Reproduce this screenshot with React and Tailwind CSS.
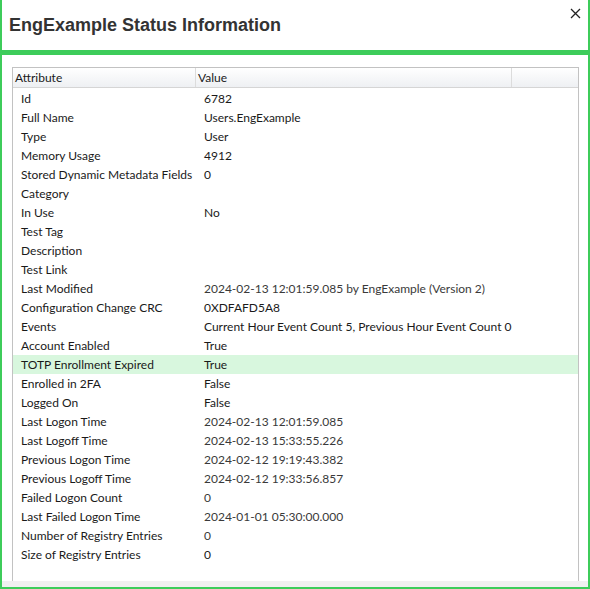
import React from "react";

const rows = [
  ["Id", "6782"],
  ["Full Name", "Users.EngExample"],
  ["Type", "User"],
  ["Memory Usage", "4912"],
  ["Stored Dynamic Metadata Fields", "0"],
  ["Category", ""],
  ["In Use", "No"],
  ["Test Tag", ""],
  ["Description", ""],
  ["Test Link", ""],
  ["Last Modified", "2024-02-13 12:01:59.085  by EngExample (Version 2)", true],
  ["Configuration Change CRC", "0XDFAFD5A8"],
  ["Events", "Current Hour Event Count 5, Previous Hour Event Count 0"],
  ["Account Enabled", "True"],
  ["TOTP Enrollment Expired", "True", false, true],
  ["Enrolled in 2FA", "False"],
  ["Logged On", "False"],
  ["Last Logon Time", "2024-02-13 12:01:59.085", true],
  ["Last Logoff Time", "2024-02-13 15:33:55.226", true],
  ["Previous Logon Time", "2024-02-12 19:19:43.382", true],
  ["Previous Logoff Time", "2024-02-12 19:33:56.857", true],
  ["Failed Logon Count", "0", true],
  ["Last Failed Logon Time", "2024-01-01 05:30:00.000", true],
  ["Number of Registry Entries", "0", true],
  ["Size of Registry Entries", "0"],
];

export default function App() {
  return (
    <div className="w-[590px] h-[589px] bg-white border-l-2 border-r-2 border-b-2 border-[#3dcc5a] flex flex-col overflow-hidden">
      <div className="h-[50px] relative flex items-center pl-[7px] shrink-0">
        <h1
          className="text-[18px] font-bold text-[#333333] leading-none"
          style={{ fontFamily: '"Liberation Sans", Arial, sans-serif' }}
        >
          EngExample Status Information
        </h1>
        <svg className="absolute right-[7px] top-[8px]" width="11" height="11" viewBox="0 0 11 11">
          <path d="M1 1 L10 10 M10 1 L1 10" stroke="#222" strokeWidth="1.3" fill="none" />
        </svg>
      </div>
      <div className="h-[5px] bg-[#3dcc5a] shrink-0" />
      <div className="flex-1 pt-[12px] pl-[10px] pr-[9px] overflow-hidden">
        <div
          className="h-full border-l border-t border-r border-[#c2c2c2] text-[12px] text-[#1a1a1a]"
          style={{ fontFamily: 'Lato, "Noto Sans", sans-serif' }}
        >
          <div className="h-[20px] flex border-b border-[#d5d5d5] bg-gradient-to-b from-white to-[#eef0f3]">
            <div className="w-[183px] border-r border-[#dcdcdc] pl-[2px] flex items-center">Attribute</div>
            <div className="w-[316px] border-r border-[#dcdcdc] pl-[2px] flex items-center">Value</div>
            <div className="flex-1" />
          </div>
          <div className="pt-[1px]">
            {rows.map(([a, v, gray, hl]) => (
              <div key={a} className={`h-[19px] flex items-center ${hl ? "bg-[#d8f7de]" : ""}`}>
                <div className="w-[183px] pl-[8px] whitespace-nowrap">{a}</div>
                <div className={`flex-1 pl-[8px] whitespace-nowrap ${gray ? "text-[#3a3a3a]" : ""}`}>{v}</div>
              </div>
            ))}
          </div>
        </div>
      </div>
      <div className="h-[6px] bg-[#f0f0f0] shrink-0" />
    </div>
  );
}
